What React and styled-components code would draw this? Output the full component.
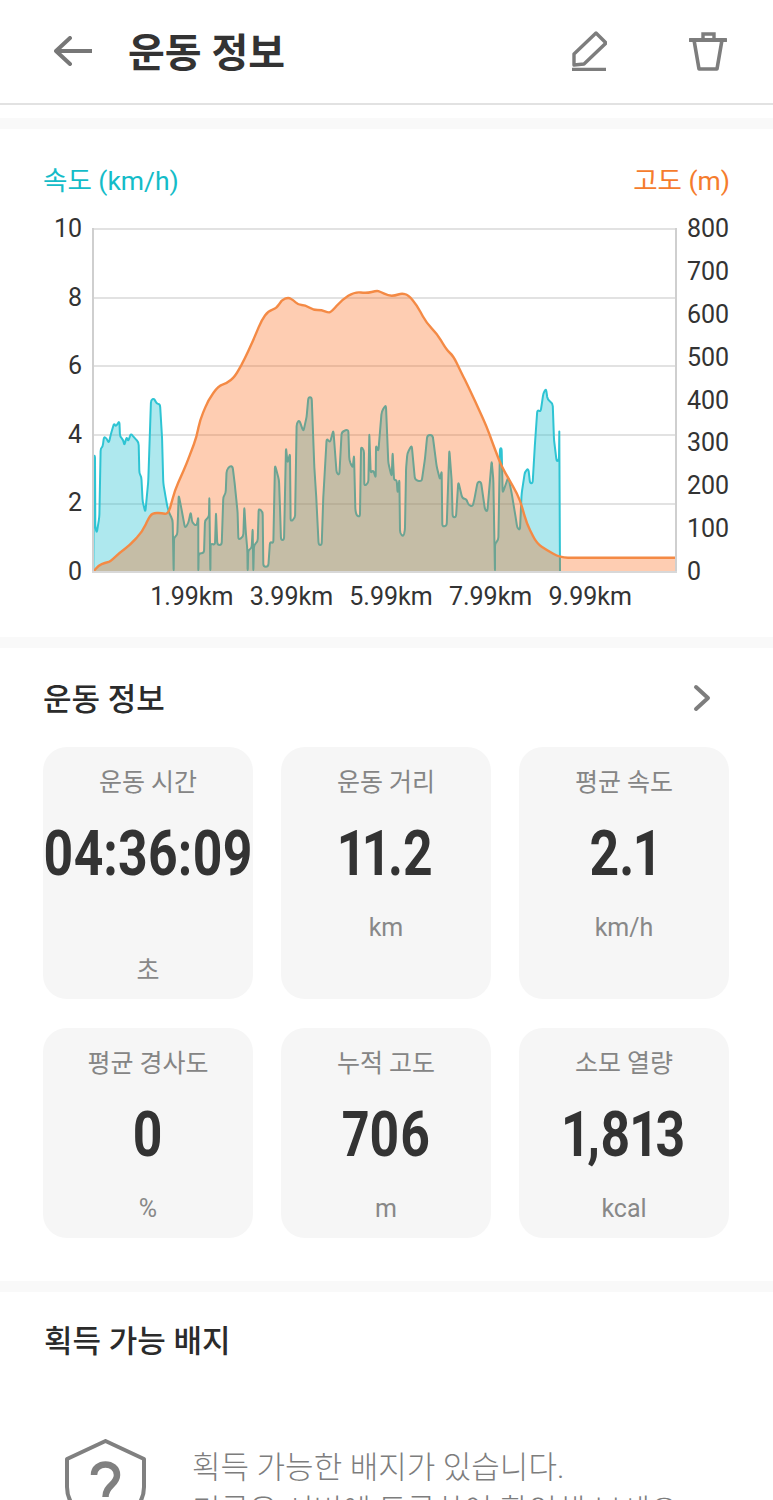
import React from "react";
import styled, { createGlobalStyle } from "styled-components";

const GlobalStyle = createGlobalStyle`
  html, body {
    margin: 0;
    padding: 0;
    height: 1500px;
    overflow: hidden;
    background: #fff;
  }
  * { box-sizing: border-box; }
`;

const Page = styled.div`
  width: 773px;
  height: 1500px;
  overflow: hidden;
  background: #fff;
  font-family: Roboto, "Noto Sans CJK KR", sans-serif;
`;

const Header = styled.header`
  height: 105px;
  display: flex;
  align-items: center;
  padding: 0 46px 1px 54px;
  border-bottom: 2px solid #e2e2e2;
`;

const HeaderTitle = styled.h1`
  flex: 1;
  margin: 6px 0 0 36px;
  font-size: 40px;
  line-height: 50px;
  font-weight: 700;
  color: #333;
`;

const HeaderIcon = styled.svg`
  display: block;
  margin-left: ${props => props.$gap || 0}px;
`;

const Band = styled.div`
  height: 11px;
  background: #f9f9f9;
  margin-top: ${props => props.$top || 0}px;
`;

const ChartSection = styled.section`
  padding: 37px 43px 27px;
`;

const Legend = styled.div`
  display: flex;
  justify-content: space-between;
  font-size: 26.5px;
  line-height: 30px;
  font-weight: 400;
`;

const LegendLabel = styled.span`
  color: ${props => props.$color};
`;

const ChartRow = styled.div`
  display: grid;
  grid-template-columns: 39px 585px 44px;
  column-gap: 10px;
  margin-top: 32px;
  height: 345px;
  margin-right: -1px;
`;

const Axis = styled.div`
  display: flex;
  flex-direction: column;
  justify-content: space-between;
  margin: -12px 0;
  font-size: 25px;
  line-height: 26px;
  color: #333;
  text-align: ${props => props.$align};
`;

const ChartSvg = styled.svg`
  display: block;
`;

const XLabels = styled.div`
  display: flex;
  margin: 11px 0 0 99px;
`;

const XLabel = styled.span`
  width: 99.6px;
  text-align: center;
  font-size: 25px;
  line-height: 26px;
  color: #333;
  white-space: nowrap;
`;

const InfoSection = styled.section`
  padding: 28px 43px 43px;
`;

const SectionHead = styled.div`
  display: flex;
  align-items: center;
  justify-content: space-between;
  height: 44px;
  padding-right: 19px;
`;

const SectionTitle = styled.h2`
  margin: ${props => props.$drop || 0}px 0 0;
  font-size: 31px;
  line-height: 44px;
  font-weight: 500;
  color: #2b2b2b;
`;

const CardGrid = styled.div`
  display: grid;
  grid-template-columns: repeat(3, 210px);
  column-gap: 28px;
  row-gap: 29px;
  margin-top: 27px;
`;

const Card = styled.div`
  display: flex;
  flex-direction: column;
  align-items: center;
  min-height: 210px;
  padding: 20px 0 12px;
  border-radius: 24px;
  background: #f6f6f6;
`;

const CardLabel = styled.div`
  font-size: 25px;
  line-height: 32px;
  color: #858585;
`;

const CardValue = styled.div`
  margin-top: 15px;
  font-size: 63px;
  line-height: 80px;
  font-weight: 700;
  font-feature-settings: "pnum";
  color: #333;
  white-space: nowrap;
  transform: scaleX(0.82);
`;

const CardUnit = styled.div`
  margin-top: ${props => (props.$low ? 61 : 18)}px;
  font-size: 25px;
  line-height: 32px;
  font-weight: 400;
  color: #888;
`;

const BadgeSection = styled.section`
  padding: 28px 44px 0;
`;

const BadgeRow = styled.div`
  display: flex;
  align-items: flex-start;
  margin-top: 75px;
  padding-left: 21px;
`;

const ShieldIcon = styled.svg`
  display: block;
  flex: none;
  margin-right: 46px;
`;

const BadgeText = styled.p`
  margin: 7px 0 0;
  font-size: 31px;
  line-height: 43px;
  font-weight: 300;
  color: #7d7d7d;
  white-space: nowrap;
`;

// points read off the reference, in crop coordinates (3x, crop origin 80,280)
const altitude = [
  [40, 875], [55, 857], [75, 848], [90, 846], [120, 817], [150, 795], [187, 755], [210, 705], [225, 698],
  [245, 700], [265, 703], [285, 630], [320, 550], [350, 470], [360, 420], [385, 360], [415, 318], [440, 310],
  [465, 290], [495, 235], [520, 180], [545, 120], [565, 93], [590, 85], [605, 60], [625, 52], [640, 60],
  [655, 75], [675, 75], [700, 90], [725, 90], [745, 98], [755, 95], [785, 60], [825, 35], [860, 40], [890, 32],
  [900, 35], [925, 47], [945, 47], [965, 40], [985, 45], [1010, 75], [1040, 130], [1070, 160], [1100, 210],
  [1120, 228], [1140, 270], [1165, 320], [1195, 385], [1220, 440], [1240, 495], [1265, 560], [1300, 620],
  [1320, 660], [1340, 730], [1370, 790], [1400, 810], [1440, 833], [1788, 833],
];

const speedLeft = [
  [40, 875], [42, 527], [45, 527], [46, 740], [50, 760], [58, 712], [62, 505], [68, 500], [72, 470], [80, 475],
  [86, 490], [92, 465], [102, 430], [108, 440], [118, 422], [120, 470], [130, 480], [133, 497], [140, 470],
  [145, 485], [152, 460], [165, 475], [176, 487], [178, 580], [184, 590], [188, 665], [196, 697], [205, 600],
  [213, 360], [222, 355], [230, 372], [240, 372], [246, 470], [250, 610], [255, 640], [262, 680], [268, 700],
  [278, 720], [281, 875], [282, 772], [292, 765], [296, 645], [305, 690], [315, 745], [325, 730], [332, 695],
  [337, 730], [350, 738], [355, 710], [355, 875], [356, 820], [372, 820], [375, 720], [387, 712], [388, 650],
  [391, 875], [392, 790], [405, 795], [408, 697], [412, 795], [425, 795], [430, 650], [437, 640], [440, 570],
  [450, 558], [458, 560], [465, 620], [473, 700], [475, 780], [490, 770], [493, 680], [497, 750], [502, 810],
  [503, 875], [505, 810], [515, 805], [518, 745], [520, 875], [522, 795], [533, 785], [536, 685], [548, 695],
  [550, 860], [565, 860], [570, 785], [580, 790], [585, 555], [597, 600], [600, 685], [603, 780], [612, 780],
  [618, 503], [623, 550], [630, 520], [632, 725], [645, 715], [650, 430], [658, 420], [670, 455], [680, 410],
  [685, 352], [695, 352], [703, 560], [708, 640], [716, 795], [725, 795], [730, 650], [740, 475], [750, 488],
  [760, 450], [770, 580], [778, 585], [785, 455], [805, 448], [808, 540], [818, 565], [822, 525], [826, 690],
  [830, 708], [840, 710], [843, 500], [852, 510], [853, 618], [865, 610], [868, 460], [872, 580], [880, 570],
  [887, 595], [888, 495], [895, 515], [905, 395], [915, 378],
];

// second crop starts 900 further along
const speedRight = [
  [18, 378], [25, 550], [35, 590], [38, 517], [42, 600], [50, 600], [53, 640], [58, 598], [60, 760], [70, 770],
  [75, 750], [78, 570], [82, 520], [95, 495], [105, 600], [125, 605], [135, 535], [142, 465], [158, 465],
  [170, 560], [180, 600], [185, 572], [187, 740], [200, 738], [208, 510], [215, 600], [218, 712], [228, 712],
  [235, 605], [247, 655], [260, 658], [265, 675], [278, 680], [285, 648], [293, 605], [303, 605], [315, 690],
  [322, 695], [335, 542], [340, 600], [345, 875], [345, 790], [355, 780], [360, 505], [365, 505], [368, 640],
  [385, 590], [395, 640], [405, 700], [412, 745], [420, 750], [425, 640], [435, 575], [445, 565], [450, 610],
  [458, 610], [465, 490], [472, 390], [482, 395], [490, 340], [498, 325], [503, 360], [518, 370], [522, 480],
  [530, 545], [537, 540], [538, 450], [540, 875],
].map(([x, y]) => [x + 900, y]);

const speed = [...speedLeft, ...speedRight];

// crop coordinates to svg coordinates, with the corners rounded off by up to r px
const toPath = (points, r) => {
  const pts = points.map(([x, y]) => [x / 3 - 12, y / 3 + 52]);
  let d = `M${pts[0][0].toFixed(1)} ${pts[0][1].toFixed(1)}`;
  for (let i = 1; i < pts.length - 1; i++) {
    const [px, py] = pts[i - 1];
    const [x, y] = pts[i];
    const [nx, ny] = pts[i + 1];
    const inLen = Math.hypot(x - px, y - py) || 1;
    const outLen = Math.hypot(nx - x, ny - y) || 1;
    const a = Math.min(r, inLen / 2);
    const b = Math.min(r, outLen / 2);
    const sx = x - ((x - px) / inLen) * a;
    const sy = y - ((y - py) / inLen) * a;
    const ex = x + ((nx - x) / outLen) * b;
    const ey = y + ((ny - y) / outLen) * b;
    d += ` L${sx.toFixed(1)} ${sy.toFixed(1)} Q${x.toFixed(1)} ${y.toFixed(1)} ${ex.toFixed(1)} ${ey.toFixed(1)}`;
  }
  const last = pts[pts.length - 1];
  return `${d} L${last[0].toFixed(1)} ${last[1].toFixed(1)}`;
};

const gridLines = [1, 70, 138, 207, 276];

function Chart() {
  const floor = 344;
  const altPath = toPath(altitude, 8);
  const speedPath = toPath(speed, 3);
  return (
    <ChartSvg width="585" height="345" viewBox="0 0 585 345">
      {gridLines.map(y => (
        <line key={y} x1="1" x2="584" y1={y} y2={y} stroke="#e2e2e2" strokeWidth="2" />
      ))}
      <path d={`${speedPath} Z`} fill="#34c5d4" fillOpacity="0.4" />
      <path d={speedPath} fill="none" stroke="#2ec4d3" strokeWidth="2" strokeLinejoin="round" />
      <path d={`${altPath} L583 ${floor} L1 ${floor} Z`} fill="#fc5800" fillOpacity="0.3" />
      <path d={altPath} fill="none" stroke="#f48a45" strokeWidth="2.4" strokeLinejoin="round" />
      <line x1="1" x2="1" y1="0" y2="345" stroke="#cfcfcf" strokeWidth="2" />
      <line x1="584" x2="584" y1="0" y2="345" stroke="#cfcfcf" strokeWidth="2" />
      <line x1="0" x2="585" y1="344" y2="344" stroke="#d8d8d8" strokeWidth="2" />
    </ChartSvg>
  );
}

const cards = [
  { label: "운동 시간", value: "04:36:09", unit: "초", low: true },
  { label: "운동 거리", value: "11.2", unit: "km" },
  { label: "평균 속도", value: "2.1", unit: "km/h" },
  { label: "평균 경사도", value: "0", unit: "%" },
  { label: "누적 고도", value: "706", unit: "m" },
  { label: "소모 열량", value: "1,813", unit: "kcal" },
];

export default function App() {
  return (
    <Page>
      <GlobalStyle />
      <Header>
        <svg width="38" height="30" viewBox="0 0 38 30">
          <path d="M16 2 L2 15 L16 28 M2 15 H38" fill="none" stroke="#777" strokeWidth="4" strokeLinecap="round" strokeLinejoin="round" />
        </svg>
        <HeaderTitle>운동 정보</HeaderTitle>
        <HeaderIcon width="36" height="40" viewBox="0 0 36 40">
          <path d="M25 2 L35 12 L13 33 L3 34 L3 23 Z" fill="none" stroke="#7d7d7d" strokeWidth="3.4" strokeLinejoin="round" />
          <path d="M1 38.5 H35" stroke="#7d7d7d" strokeWidth="3.4" />
        </HeaderIcon>
        <HeaderIcon $gap={82} width="38" height="40" viewBox="0 0 38 40">
          <path d="M1 9 H37" stroke="#7d7d7d" strokeWidth="4" strokeLinecap="round" />
          <path d="M14 8 V3 H25 V8" fill="none" stroke="#7d7d7d" strokeWidth="3.4" />
          <path d="M5 9 L10 38 H28 L33 9" fill="none" stroke="#7d7d7d" strokeWidth="3.6" strokeLinejoin="round" />
        </HeaderIcon>
      </Header>
      <Band $top={13} />

      <ChartSection>
        <Legend>
          <LegendLabel $color="#14bcc8">속도 (km/h)</LegendLabel>
          <LegendLabel $color="#f57c2d">고도 (m)</LegendLabel>
        </Legend>
        <ChartRow>
          <Axis $align="right">
            {[10, 8, 6, 4, 2, 0].map(n => <span key={n}>{n}</span>)}
          </Axis>
          <Chart />
          <Axis $align="left">
            {[800, 700, 600, 500, 400, 300, 200, 100, 0].map(n => <span key={n}>{n}</span>)}
          </Axis>
        </ChartRow>
        <XLabels>
          {["1.99km", "3.99km", "5.99km", "7.99km", "9.99km"].map(t => <XLabel key={t}>{t}</XLabel>)}
        </XLabels>
      </ChartSection>
      <Band />

      <InfoSection>
        <SectionHead>
          <SectionTitle $drop={3}>운동 정보</SectionTitle>
          <svg width="18" height="28" viewBox="0 0 18 28">
            <path d="M3 3 L15 14 L3 25" fill="none" stroke="#7d7d7d" strokeWidth="4" strokeLinecap="round" strokeLinejoin="round" />
          </svg>
        </SectionHead>
        <CardGrid>
          {cards.map(c => (
            <Card key={c.label}>
              <CardLabel>{c.label}</CardLabel>
              <CardValue>{c.value}</CardValue>
              <CardUnit $low={c.low}>{c.unit}</CardUnit>
            </Card>
          ))}
        </CardGrid>
      </InfoSection>
      <Band />

      <BadgeSection>
        <SectionTitle>획득 가능 배지</SectionTitle>
        <BadgeRow>
          <ShieldIcon width="81" height="92" viewBox="0 0 81 92">
            <path d="M40.5 2 L79 20 V48 C79 68 60 82 40.5 90 C21 82 2 68 2 48 V20 Z" fill="none" stroke="#808080" strokeWidth="4" strokeLinejoin="round" />
            <path d="M29 36 C29 22 52 22 52 36 C52 46 40.5 46 40.5 58" fill="none" stroke="#808080" strokeWidth="6.5" />
          </ShieldIcon>
          <BadgeText>
            획득 가능한 배지가 있습니다.
            <br />
            기록은 서버에 등록하여 확인해 보세요
          </BadgeText>
        </BadgeRow>
      </BadgeSection>
    </Page>
  );
}
